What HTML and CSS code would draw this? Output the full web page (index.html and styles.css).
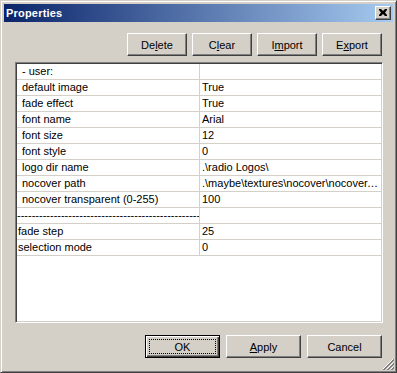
FILE: index.html
```html
<!DOCTYPE html>
<html>
<head>
<meta charset="utf-8">
<link rel="stylesheet" href="styles.css">
</head>
<body>
<div class="window">
  <div class="titlebar">
    <span class="title">Properties</span>
    <button class="close-btn" aria-label="Close">
      <svg width="8" height="7" viewBox="0 0 8 7"><path d="M0 0h2l2 2 2-2h2v1l-2 2.5 2 2.5v1h-2l-2-2-2 2h-2v-1l2-2.5-2-2.5z" fill="#000"/></svg>
    </button>
  </div>
  <div class="toolbar">
    <button class="btn small">De<u>l</u>ete</button>
    <button class="btn small">C<u>l</u>ear</button>
    <button class="btn small">I<u>m</u>port</button>
    <button class="btn small">E<u>x</u>port</button>
  </div>
  <div class="grid">
    <div class="cell key ind">- user:</div><div class="cell val"></div>
    <div class="cell key ind">default image</div><div class="cell val">True</div>
    <div class="cell key ind">fade effect</div><div class="cell val">True</div>
    <div class="cell key ind">font name</div><div class="cell val">Arial</div>
    <div class="cell key ind">font size</div><div class="cell val">12</div>
    <div class="cell key ind">font style</div><div class="cell val">0</div>
    <div class="cell key ind">logo dir name</div><div class="cell val">.\radio Logos\</div>
    <div class="cell key ind">nocover path</div><div class="cell val">.\maybe\textures\nocover\nocover.png</div>
    <div class="cell key ind">nocover transparent (0-255)</div><div class="cell val">100</div>
    <div class="cell key sep">------------------------------------------------------------</div><div class="cell val"></div>
    <div class="cell key">fade step</div><div class="cell val">25</div>
    <div class="cell key">selection mode</div><div class="cell val">0</div>
  </div>
  <div class="footer">
    <button class="btn wide default"><span class="focus">OK</span></button>
    <button class="btn wide"><u>A</u>pply</button>
    <button class="btn wide">Cancel</button>
  </div>
  <svg class="grip" width="12" height="12" viewBox="0 0 12 12">
    <path d="M11 1L1 11M11 5L5 11M11 9L9 11" stroke="#fff" stroke-width="1" shape-rendering="crispEdges"/>
    <path d="M12 1L1 12M12 2L2 12M12 5L5 12M12 6L6 12M12 9L9 12M12 10L10 12" stroke="#808080" stroke-width="1" fill="none"/>
  </svg>
</div>
</body>
</html>
```
FILE: styles.css
```css
* { box-sizing: border-box; }
html, body { margin: 0; padding: 0; background: #d4d0c8; }
body { font-family: "Liberation Sans", Arial, sans-serif; font-size: 11px; color: #000; }

.window {
  position: relative;
  width: 397px;
  height: 373px;
  border: 1px solid;
  border-color: #d4d0c8 #404040 #404040 #d4d0c8;
  box-shadow: inset 1px 1px 0 #fff, inset -1px -1px 0 #808080;
  padding: 3px;
  display: flex;
  flex-direction: column;
  background: #d4d0c8;
}

.titlebar {
  height: 18px;
  background: linear-gradient(to right, #0a246a, #a6caf0);
  display: flex;
  align-items: center;
  justify-content: space-between;
  padding: 0 2px 0 2px;
  flex: none;
}
.title { color: #fff; font-weight: bold; font-size: 11px; letter-spacing: 0.2px; }

.close-btn {
  width: 16px;
  height: 14px;
  padding: 0;
  margin: 0;
  background: #d4d0c8;
  border: 1px solid;
  border-color: #fff #404040 #404040 #fff;
  box-shadow: inset -1px -1px 0 #808080;
  display: flex;
  align-items: center;
  justify-content: center;
}
.close-btn svg { display: block; margin: 0 1px 1px 0; }

.btn {
  font-family: "Liberation Sans", Arial, sans-serif;
  font-size: 11px;
  color: #000;
  height: 23px;
  padding: 0;
  margin: 0;
  background: #d4d0c8;
  border: 1px solid;
  border-color: #fff #404040 #404040 #fff;
  box-shadow: inset -1px -1px 0 #808080;
  display: flex;
  align-items: center;
  justify-content: center;
  flex: none;
}
.btn u { text-decoration: underline; text-underline-offset: 1px; }
.small { width: 60px; }
.wide { width: 75px; }

.toolbar {
  display: flex;
  justify-content: flex-end;
  gap: 5px;
  margin: 11px 11px 0 0;
  flex: none;
}

.grid {
  margin: 6px 10px 0 11px;
  height: 261px;
  border: 1px solid;
  border-color: #808080 #fff #fff #808080;
  box-shadow: inset 1px 1px 0 #404040, inset -1px -1px 0 #d4d0c8;
  padding: 1px;
  background: #fff;
  display: grid;
  grid-template-columns: 183px 1fr;
  grid-auto-rows: 16px;
  align-content: start;
  flex: none;
}
.cell {
  height: 16px;
  line-height: 15px;
  border-bottom: 1px solid #d4d0c8;
  white-space: nowrap;
  overflow: hidden;
  background: #fff;
}
.key { border-right: 1px solid #d4d0c8; padding-left: 1px; }
.key.ind { padding-left: 5px; }
.key.sep { padding-left: 0; letter-spacing: 0; }
.val { padding-left: 2px; text-overflow: ellipsis; padding-right: 1px; }

.footer {
  display: flex;
  justify-content: flex-end;
  gap: 6px;
  margin: 12px 11px 0 0;
  flex: none;
}
.default {
  border: 1px solid #000;
  box-shadow: inset 1px 1px 0 #fff, inset -1px -1px 0 #404040, inset -2px -2px 0 #808080;
  padding: 3px;
}
.focus {
  display: flex;
  align-items: center;
  justify-content: center;
  width: 100%;
  height: 100%;
  outline: 1px dotted #000;
  outline-offset: -1px;
}

.grip {
  position: absolute;
  right: 2px;
  bottom: 2px;
}
```
